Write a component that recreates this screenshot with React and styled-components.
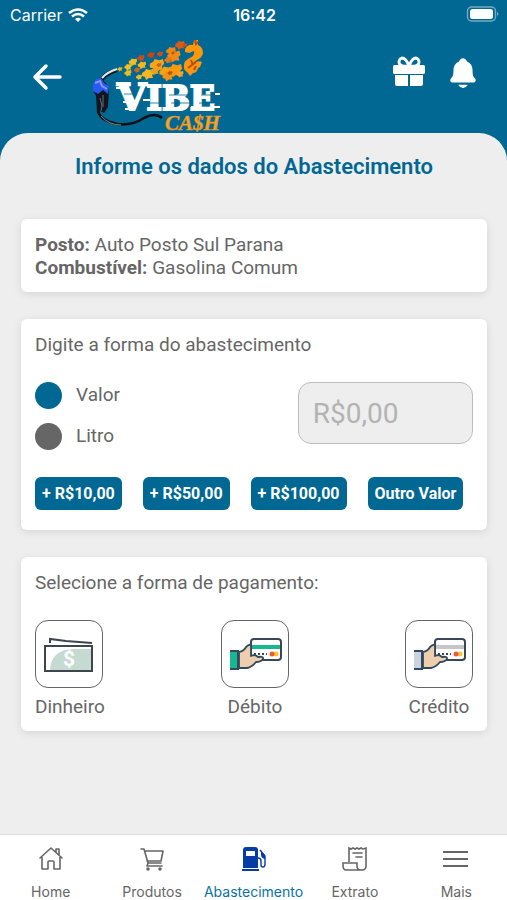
import React, { useState } from "react";
import styled, { createGlobalStyle } from "styled-components";
import { IoNotifications } from "react-icons/io5";

const blue = "#006892";
const grey = "#666666";

const GlobalStyle = createGlobalStyle`
  *, *::before, *::after { box-sizing: border-box; }
  body { margin: 0; background: ${blue}; color: ${grey}; font-family: Roboto, sans-serif; }
  button, input { font-family: inherit; }
`;

const Screen = styled.div`
  min-height: 100vh;
  display: flex;
  flex-direction: column;
  background: ${blue};
`;

const StatusBar = styled.div`
  height: 30px;
  padding: 0 8px 0 10px;
  display: grid;
  grid-template-columns: 1fr auto 1fr;
  align-items: center;
  color: #fff;
  font: 400 16px/20px Inter, sans-serif;
`;

const Carrier = styled.div`
  display: flex;
  align-items: center;
  gap: 6px;
`;

const Clock = styled.time`
  font-weight: 600;
`;

const Battery = styled.svg`
  justify-self: end;
`;

const Header = styled.header`
  height: 103px;
  padding: 0 27px 0 30px;
  display: flex;
  align-items: flex-start;
`;

const LogoBox = styled.div`
  padding-top: 10px;
  display: flex;
`;

const IconButton = styled.button`
  padding: 0;
  border: 0;
  background: none;
  color: #fff;
  display: flex;
  cursor: pointer;
`;

const BackButton = styled(IconButton)`
  margin: 30px 28px 0 0;
`;

const HeaderActions = styled.div`
  margin: 26px 0 0 auto;
  display: flex;
  gap: 20px;
`;

const Content = styled.main`
  flex: 1;
  padding: 20px 20px 27px 21px;
  background: #eeeeee;
  border-radius: 28px 28px 0 0;
  display: flex;
  flex-direction: column;
  gap: 27px;
`;

const Title = styled.h1`
  margin: 0 0 12px;
  color: ${blue};
  font-size: 22px;
  line-height: 27px;
  font-weight: 600;
  text-align: center;
`;

const Card = styled.section`
  padding: 14px 14px 13px;
  background: #fff;
  border-radius: 6px;
  box-shadow: 0 2px 8px rgba(0, 0, 0, 0.1);
`;

const Detail = styled.p`
  margin: 0;
  font-size: 19px;
  line-height: 23px;
`;

const Heading = styled.h2`
  margin: 0;
  font-size: 19px;
  line-height: 23px;
  font-weight: 400;
`;

const AmountRow = styled.div`
  margin-top: 26px;
  display: flex;
  justify-content: space-between;
`;

const Options = styled.div`
  display: flex;
  flex-direction: column;
  gap: 14px;
`;

const Option = styled.label`
  display: flex;
  align-items: flex-start;
  gap: 14px;
  font-size: 19px;
  line-height: 25px;
  cursor: pointer;
`;

const Radio = styled.input`
  appearance: none;
  width: 27px;
  height: 27px;
  margin: 0;
  border-radius: 50%;
  background: ${grey};
  &:checked { background: ${blue}; }
`;

const AmountInput = styled.input`
  width: 40%;
  height: 62px;
  padding: 0 14px;
  border: 1px solid #bdbdbd;
  border-radius: 13px;
  background: #eeeeee;
  color: ${grey};
  font-size: 28px;
  &::placeholder { color: #b3b3b3; opacity: 1; }
`;

const QuickValues = styled.div`
  margin: 27px 0 7px;
  display: flex;
  gap: 21px;
`;

const ValueButton = styled.button`
  height: 33px;
  padding: 0 7px;
  border: 0;
  border-radius: 6px;
  background: ${blue};
  color: #fff;
  font-size: 16px;
  font-weight: 700;
  white-space: nowrap;
  cursor: pointer;
`;

const Payments = styled.div`
  margin-top: 26px;
  display: flex;
  justify-content: space-between;
`;

const Payment = styled.button`
  padding: 0;
  border: 0;
  background: none;
  color: inherit;
  display: flex;
  flex-direction: column;
  align-items: ${(p) => p.$align || "center"};
  gap: 7px;
  font-size: 19px;
  line-height: 23px;
  cursor: pointer;
`;

const Tile = styled.span`
  width: 68px;
  height: 68px;
  border: 1px solid ${grey};
  border-radius: 13px;
  display: flex;
  align-items: center;
  justify-content: center;
`;

const TabBar = styled.nav`
  height: 66px;
  background: #fff;
  border-top: 1px solid #dddddd;
  display: grid;
  grid-template-columns: repeat(5, 1fr);
`;

const Tab = styled.a`
  padding-top: 11px;
  display: flex;
  flex-direction: column;
  align-items: center;
  gap: 12px;
  color: ${(p) => (p.$active ? "#0873a3" : grey)};
  font: 400 14px/16px Inter, sans-serif;
  text-decoration: none;
`;

const flakes = [
  [28, 29, 4, "#e8b51d"], [36, 27, 6, "#f6c01c"], [36, 33, 6, "#e9bd22"],
  [41, 22, 7, "#f5bd20"], [45, 30, 5, "#cf651b"], [50, 25, 7, "#f3b81f"],
  [49, 18, 6, "#cf4b16"], [47, 37, 5, "#eeb922"], [59, 15, 6, "#c94316"],
  [56, 34, 10, "#f6b61f"], [65, 25, 12, "#f5a51c"], [63, 31, 7, "#e9a11c"],
  [68, 14, 5, "#cf4d17"], [67, 25, 4, "#c9641a"], [79, 11, 8, "#f0860f"],
  [82, 16, 11, "#f18a14"], [76, 20, 6, "#e7781a"], [74, 32, 11, "#f8a016"],
  [83, 30, 12, "#fa980f"], [76, 36, 9, "#f29315"], [88, 34, 6, "#f8a321"],
  [88, 5, 8, "#d95b15"], [93, 5, 4, "#c2501a"], [78, 33, 4, "#b8551a"],
  [81, 13, 3, "#b8551a"],
];

function Logo() {
  return (
    <svg width="134" height="98" viewBox="0 0 134 98" role="img" aria-label="Vibe Cash">
      {flakes.map(([x, y, s, fill]) => (
        <path
          key={`${x}-${y}`}
          transform={`translate(${x} ${y}) scale(${s / 10})`}
          fill={fill}
          d="M-6-1-3-3-2-5 2-4 5-5 6-1 4 1 5 4 1 4-2 6-3 3-6 2Z"
        />
      ))}
      <path d="M93 9q3-5 8-4l1-5h4v5q5 2 5 8-1 5-6 7l-4 3q6-3 9-1l-2 5-2 1q-1 5-5 5l-3 3-3-4q-4-2-3-7 0-4 4-6l5-3q2-3 1-5l-5 2-4-1Z" fill="#fc960b" />
      <path d="m103 0 1 4 2-2m-7 18 2 5m-5 3 4-3 4-3m0 4-2 4" stroke="#bb4c12" strokeWidth="2" fill="none" />
      <path d="M6 70q1 10 19 14 15 2 27-6 11-6 18 0" fill="none" stroke="#101114" strokeWidth="2.6" />
      <path d="M9 76q8 9 20 9" fill="none" stroke="#7f8789" strokeWidth="1" />
      <path d="M8 43q3-9 17-13" fill="none" stroke="#111827" strokeWidth="4" />
      <path d="M10 38q5-6 15-9" fill="none" stroke="#e4eaed" strokeWidth="2" />
      <path d="m2 42 7-3 5 4 3 6-1 18-4 6-4-2-3 2-1-17-3-6Z" fill="#10151f" />
      <path d="m1 44 3-5 5-1 3 5 5 3-1 8-5-4-5 4-5-3Z" fill="#285cf1" />
      <path d="m3 43 5-2 2 5 5 3" fill="none" stroke="#8794fc" strokeWidth="2" />
      <path d="M11 55v12m-3-9 2 8-1 5" fill="none" stroke="#64707c" strokeWidth="1" />
      <text x="25" y="70" fill="#fff" stroke="#fff" strokeWidth="2" fontFamily="DejaVu Serif, serif" fontWeight="700" fontSize="38">
        V<tspan fontSize="33">IBE</tspan>
      </text>
      <path d="M24 47h6v2h-6zm7 14h7v2h-7zm2 7h10v2H33zm18-9h7v2h-7zm48 7h7v2h-7zm24-13h5v2h-5zm-1 13h6v2h-6z" fill="#fff" />
      <path d="M32 54h13m11 9h13m8-8h22m-20 8h22m8-8h14m-16 8h15" stroke={blue} strokeWidth=".8" />
      <text x="73" y="90" fill="#f5a52a" stroke="#e08a20" strokeWidth=".5" fontFamily="Liberation Serif, serif" fontStyle="italic" fontWeight="700" fontSize="21">CA$H</text>
    </svg>
  );
}

function WifiIcon() {
  return (
    <svg width="20" height="15" viewBox="0 0 20 15" fill="none" stroke="#fff" strokeWidth="2.6" aria-hidden="true">
      <path d="M1 5q9-7 18 0M4 8.5q6-5 12 0" />
      <path d="M7 11q3-2.5 6 0l-3 3Z" fill="#fff" stroke="none" />
    </svg>
  );
}

function GiftIcon() {
  return (
    <svg width="34" height="32" viewBox="0 0 34 32" fill="currentColor" aria-hidden="true">
      <rect x="1" y="9" width="32" height="9" rx="1.5" />
      <path d="M3 19h13v11H5q-2 0-2-2Zm15 0h13v9q0 2-2 2H18Z" />
      <path d="M17 10Q7 11 7 6q0-3 3-4 4 0 7 8Q20 2 24 2q3 1 3 4 0 5-10 4Z" fill="none" stroke="currentColor" strokeWidth="2.8" />
    </svg>
  );
}

function CashIcon() {
  return (
    <svg width="52" height="38" viewBox="0 0 52 38" aria-hidden="true">
      <path d="M7 35q1-21 25-21h17v21Z" fill="#c5dbd1" />
      <path d="M2 11h47v25H2Z" fill="none" stroke="#3f454f" strokeWidth="2" />
      <path d="M7 8V4l16 2 26 2" fill="none" stroke="#3f454f" strokeWidth="2" />
      <text x="26" y="31" textAnchor="middle" fill="#fff" fontFamily="Roboto, sans-serif" fontSize="21" fontWeight="700">$</text>
    </svg>
  );
}

function CardHandIcon({ sleeve, stripe }) {
  return (
    <svg width="54" height="36" viewBox="0 0 54 36" aria-hidden="true">
      <path d="M2 15h8v18H2Z" fill={sleeve} />
      <path d="M2 15h8v18H2" fill="none" stroke="#34495e" strokeWidth="2" />
      <path d="M23 22V6q0-3 3-3h24q3 0 3 3v15q0 3-3 3H30" fill="#fff" stroke="#3b4656" strokeWidth="2" />
      <path d="M24 9h28v4H24Z" fill={stripe} />
      <path d="M11 16q5-1 7-5 3-3 5-2v11q4-2 7 1 6-1 5 2-2 3-7 3-4 5-9 6h-8Z" fill="#edcfad" stroke="#34495e" strokeWidth="1.8" strokeLinejoin="round" />
      <path d="M26 18h13" stroke="#3b4656" strokeWidth="2" strokeDasharray="2 2" />
      <circle cx="48" cy="18" r="2.5" fill="#ffc530" />
      <circle cx="44" cy="18" r="2.5" fill="#f0583c" />
    </svg>
  );
}

function HomeIcon() {
  return (
    <svg width="26" height="26" viewBox="0 0 26 26" fill="none" stroke={grey} strokeWidth="1.6" strokeLinejoin="round" strokeLinecap="round" aria-hidden="true">
      <path d="M2 12 13 2l11 10M4 11v12h6v-7q0-1 1-1h4q1 0 1 1v7h6V11M18 6V3h3v6" />
    </svg>
  );
}

function CartIcon() {
  return (
    <svg width="26" height="26" viewBox="0 0 26 26" fill="none" stroke={grey} strokeWidth="1.6" strokeLinejoin="round" strokeLinecap="round" aria-hidden="true">
      <path d="M2 3h3l4 14h13M6 5h18l-2 10H8m1 2-1 3h15" />
      <circle cx="9" cy="23" r="1" fill={grey} />
      <circle cx="21" cy="23" r="1" fill={grey} />
    </svg>
  );
}

function PumpIcon() {
  return (
    <svg width="26" height="26" viewBox="0 0 26 26" aria-hidden="true">
      <path fillRule="evenodd" fill="#063ca6" d="M3 22V4q0-3 3-3h9q3 0 3 3v18ZM6 5v5h9V5Z" />
      <path d="M2 24h17" stroke="#063ca6" strokeWidth="2" />
      <path d="M18 12q3 0 3 3v4q0 2 2 2t2-3v-8l-5-6" fill="none" stroke="#063ca6" strokeWidth="1.4" />
      <path d="m21 5 4 4v4q-4-1-4-4Z" fill="#063ca6" />
    </svg>
  );
}

function StatementIcon() {
  return (
    <svg width="26" height="26" viewBox="0 0 26 26" fill="none" stroke={grey} strokeWidth="1.6" aria-hidden="true">
      <path d="M7 16V2l2 1 2-1 2 1 2-1 2 1 2-1 2 1 3-1v18q0 4-4 4H4q-3 0-3-5v-2h14v3q0 4 4 4" />
      <path d="M11 7h9m-6 4h6" strokeLinecap="round" />
    </svg>
  );
}

function MenuIcon() {
  return (
    <svg width="26" height="26" viewBox="0 0 26 26" fill="none" stroke={grey} strokeWidth="2" aria-hidden="true">
      <path d="M0 6h25M0 13h25M0 20h25" />
    </svg>
  );
}

const tabs = [
  ["Home", HomeIcon],
  ["Produtos", CartIcon],
  ["Abastecimento", PumpIcon],
  ["Extrato", StatementIcon],
  ["Mais", MenuIcon],
];

export default function App() {
  const [unit, setUnit] = useState("Valor");
  return (
    <Screen>
      <GlobalStyle />
      <StatusBar>
        <Carrier>Carrier <WifiIcon /></Carrier>
        <Clock>16:42</Clock>
        <Battery width="34" height="18" viewBox="0 0 34 18" role="img" aria-label="Bateria">
          <rect x="2.5" y="1" width="28" height="14" rx="4" fill="none" stroke="#76aac1" strokeWidth="1.4" />
          <rect x="5" y="3" width="23" height="10" rx="2.5" fill="#fff" />
          <path d="M32 6q3 2 0 4Z" fill="#76aac1" />
        </Battery>
      </StatusBar>
      <Header>
        <BackButton type="button" aria-label="Voltar">
          <svg width="34" height="34" viewBox="0 0 34 34" fill="none" stroke="currentColor" strokeWidth="3.5" strokeLinecap="round" strokeLinejoin="round">
            <path d="M16 6 5 17l11 11M5 17h25" />
          </svg>
        </BackButton>
        <LogoBox><Logo /></LogoBox>
        <HeaderActions>
          <IconButton type="button" aria-label="Presentes"><GiftIcon /></IconButton>
          <IconButton type="button" aria-label="Notificações"><IoNotifications size={34} /></IconButton>
        </HeaderActions>
      </Header>
      <Content>
        <Title>Informe os dados do Abastecimento</Title>
        <Card>
          <Detail><strong>Posto:</strong> Auto Posto Sul Parana</Detail>
          <Detail><strong>Combustível:</strong> Gasolina Comum</Detail>
        </Card>
        <Card>
          <Heading>Digite a forma do abastecimento</Heading>
          <AmountRow>
            <Options>
              {["Valor", "Litro"].map((name) => (
                <Option key={name}>
                  <Radio type="radio" name="unit" checked={unit === name} onChange={() => setUnit(name)} />
                  {name}
                </Option>
              ))}
            </Options>
            <AmountInput aria-label="Valor do abastecimento" placeholder="R$0,00" />
          </AmountRow>
          <QuickValues>
            {["+ R$10,00", "+ R$50,00", "+ R$100,00", "Outro Valor"].map((label) => (
              <ValueButton type="button" key={label}>{label}</ValueButton>
            ))}
          </QuickValues>
        </Card>
        <Card>
          <Heading>Selecione a forma de pagamento:</Heading>
          <Payments>
            <Payment type="button" $align="flex-start"><Tile><CashIcon /></Tile>Dinheiro</Payment>
            <Payment type="button"><Tile><CardHandIcon sleeve="#17b890" stripe="#17b890" /></Tile>Débito</Payment>
            <Payment type="button"><Tile><CardHandIcon sleeve="#c8d5e1" stripe="#c4c6ca" /></Tile>Crédito</Payment>
          </Payments>
        </Card>
      </Content>
      <TabBar>
        {tabs.map(([label, Icon]) => (
          <Tab href="#" key={label} $active={label === "Abastecimento"} aria-current={label === "Abastecimento" ? "page" : undefined}>
            <Icon />
            {label}
          </Tab>
        ))}
      </TabBar>
    </Screen>
  );
}
